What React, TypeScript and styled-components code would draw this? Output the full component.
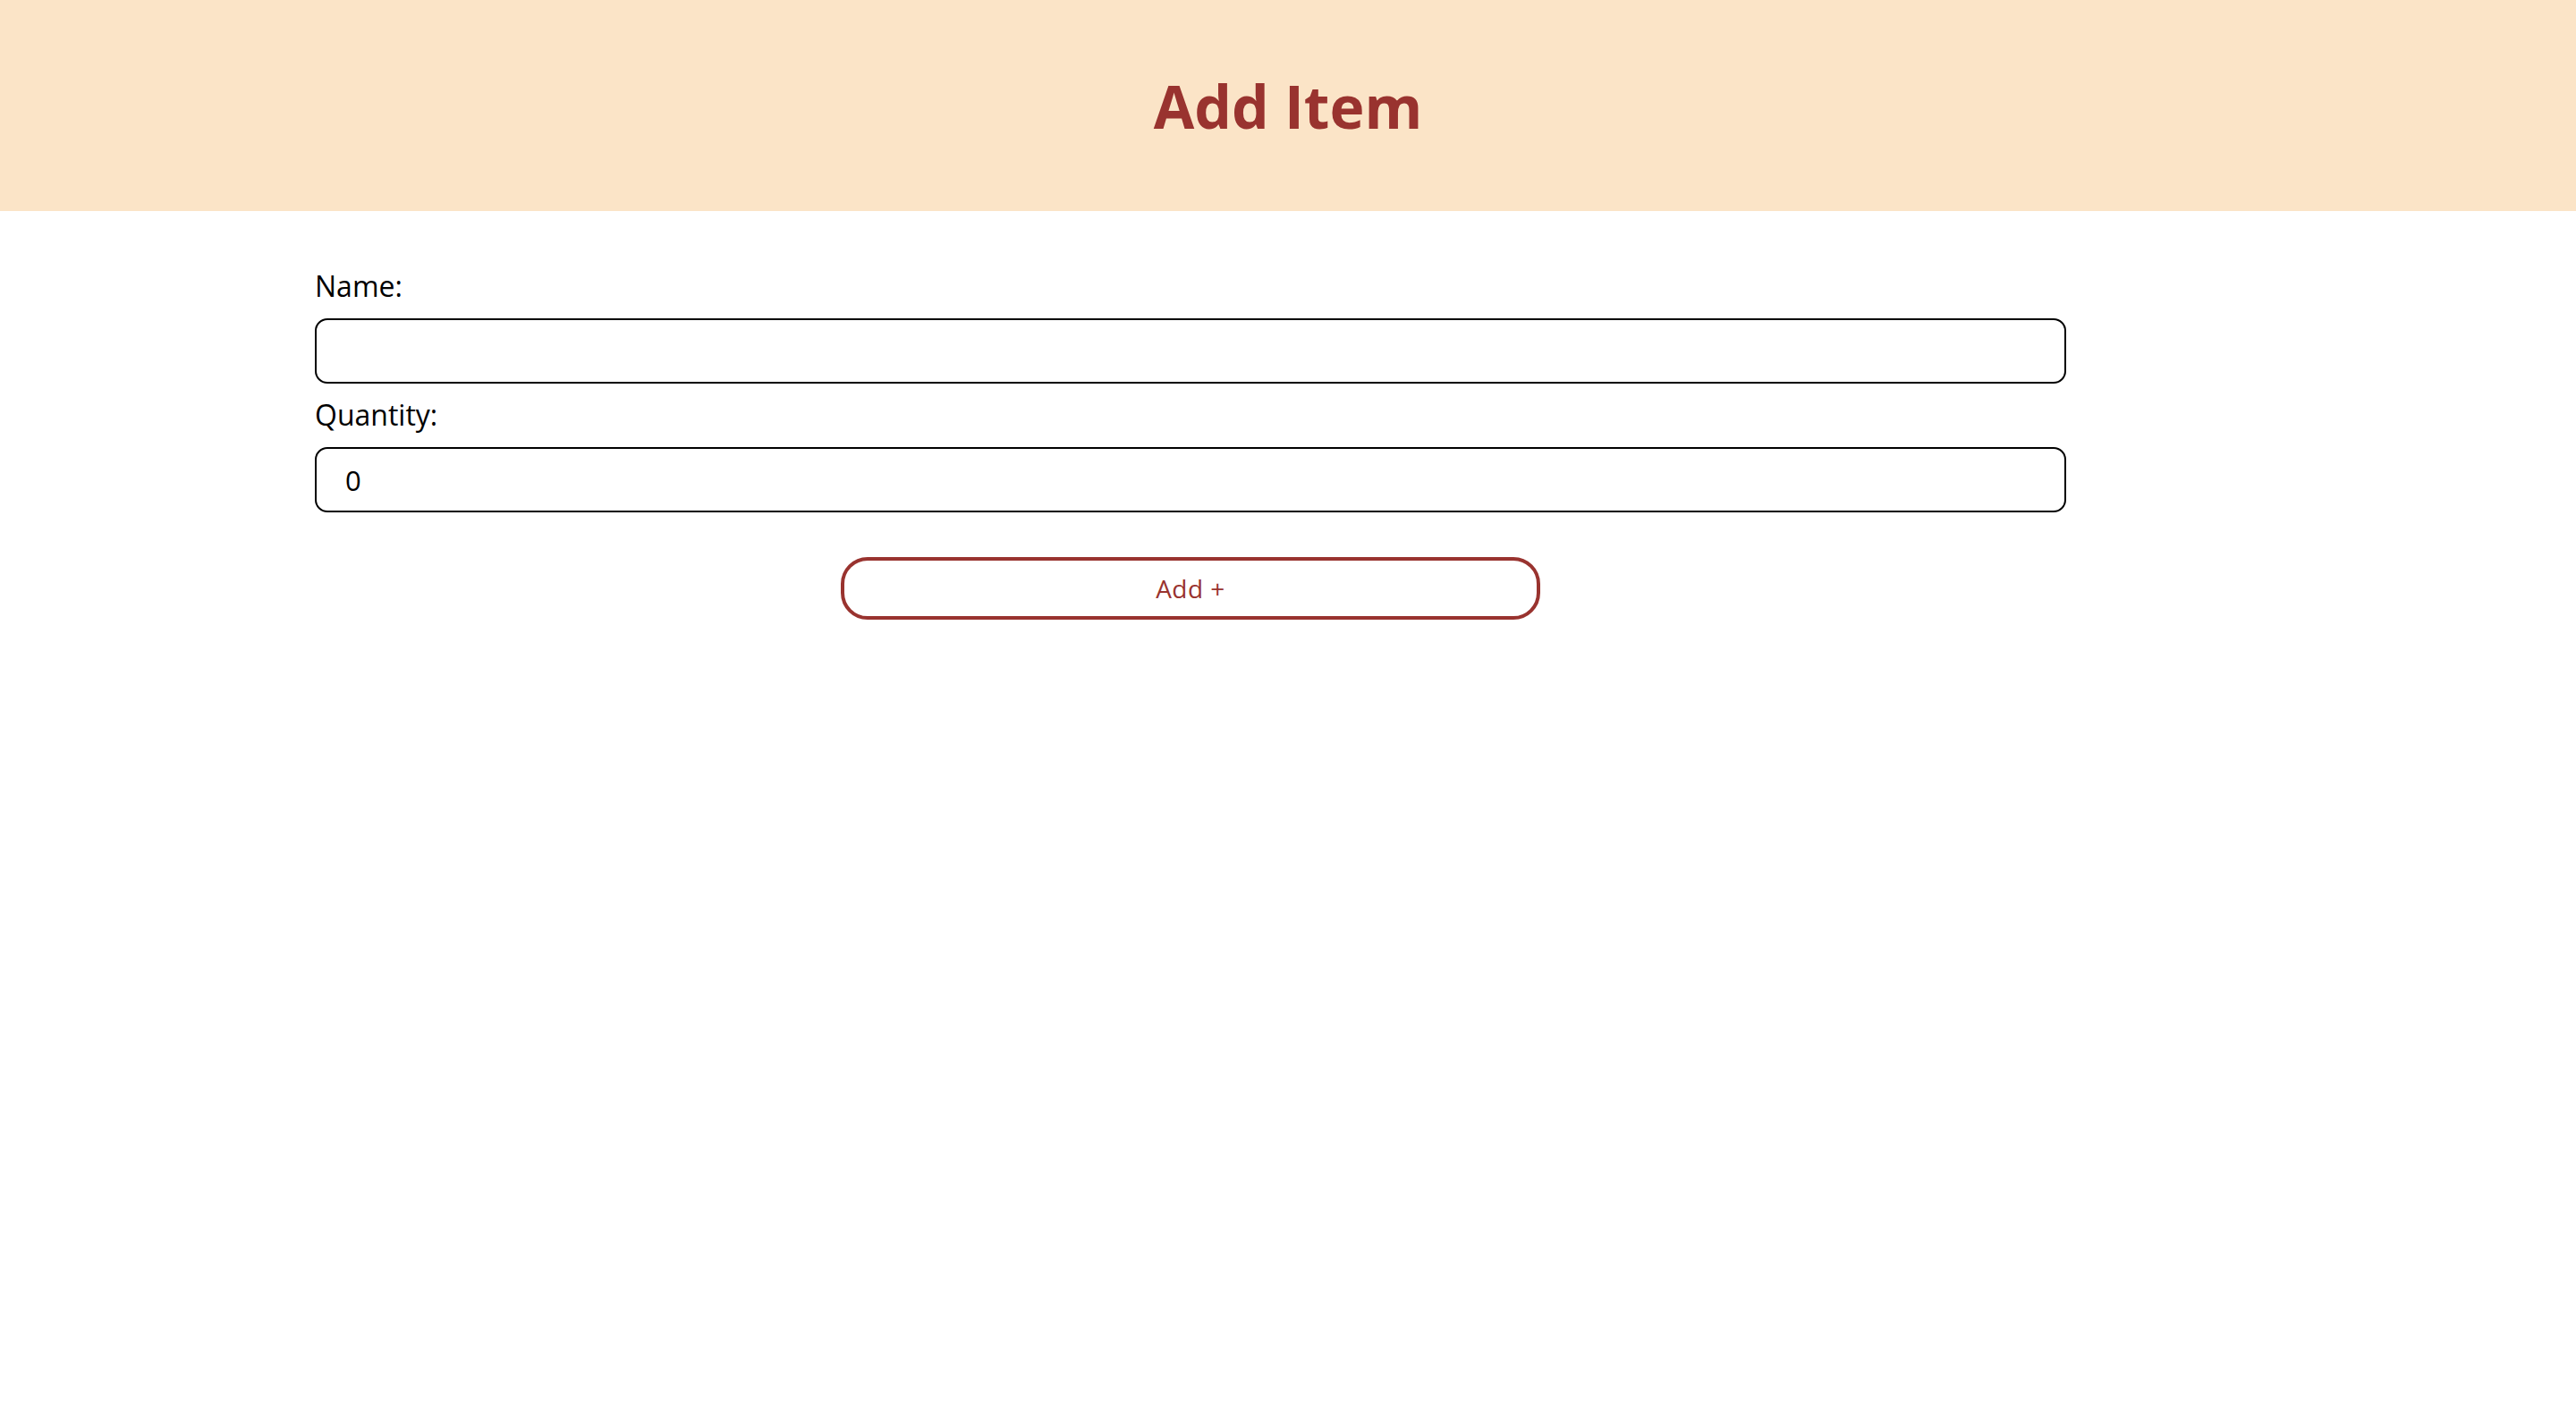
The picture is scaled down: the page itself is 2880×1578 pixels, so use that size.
import React from "react";
import styled, { createGlobalStyle } from "styled-components";

const Global = createGlobalStyle`
  html, body { margin: 0; padding: 0; background: #ffffff; }
  body { font-family: "Open Sans", "DejaVu Sans", sans-serif; }
  * { box-sizing: border-box; }
`;

const Header = styled.header`
  height: 236px;
  background: #fbe4c7;
  display: flex;
  align-items: center;
  justify-content: center;
`;

const Title = styled.h1`
  margin: 0;
  font-family: "Open Sans", sans-serif;
  font-weight: 700;
  font-size: 66px;
  color: #99332f;
  line-height: 1;
`;

const Form = styled.form`
  width: 1958px;
  margin-left: 352px;
  padding-top: 67px;
  display: flex;
  flex-direction: column;
`;

const Label = styled.label<{ $gapTop?: number }>`
  font-family: "Open Sans", sans-serif;
  font-size: 32px;
  line-height: 34px;
  color: #000;
  margin-top: ${(p) => p.$gapTop ?? 0}px;
  margin-bottom: 19px;
`;

const Input = styled.input`
  height: 73px;
  width: 100%;
  border: 2px solid #000;
  border-radius: 14px;
  padding: 0 32px;
  font-family: "Open Sans", sans-serif;
  font-size: 31px;
  color: #000;
  background: #fff;
  outline: none;
`;

const ButtonRow = styled.div`
  display: flex;
  justify-content: center;
  margin-top: 50px;
`;

const AddButton = styled.button`
  width: 782px;
  height: 70px;
  border: 4px solid #99332f;
  border-radius: 30px;
  background: #fff;
  color: #99332f;
  font-family: "Open Sans", sans-serif;
  font-size: 28px;
  letter-spacing: 0.5px;
  cursor: pointer;
`;

export default function App() {
  return (
    <>
      <Global />
      <Header>
        <Title>Add Item</Title>
      </Header>
      <Form onSubmit={(e) => e.preventDefault()}>
        <Label htmlFor="name">Name:</Label>
        <Input id="name" type="text" defaultValue="" />
        <Label htmlFor="qty" $gapTop={18}>
          Quantity:
        </Label>
        <Input id="qty" type="text" defaultValue="0" />
        <ButtonRow>
          <AddButton type="submit">Add +</AddButton>
        </ButtonRow>
      </Form>
    </>
  );
}
